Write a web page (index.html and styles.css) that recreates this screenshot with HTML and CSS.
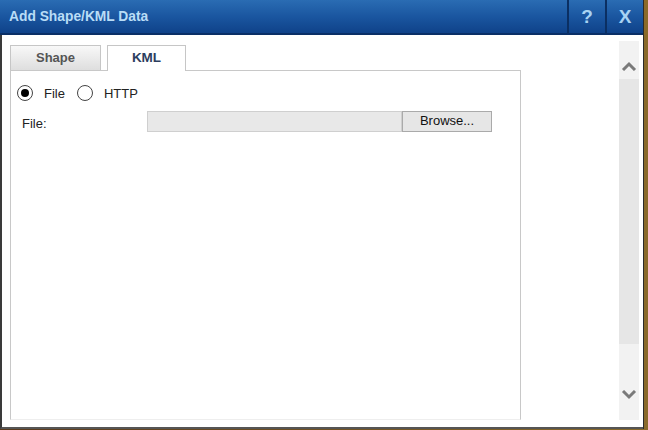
FILE: index.html
```html
<!DOCTYPE html>
<html>
<head>
<meta charset="utf-8">
<link rel="stylesheet" href="styles.css">
</head>
<body>
<div class="dialog">
  <div class="titlebar">
    <div class="title">Add Shape/KML Data</div>
    <div class="tbtn">?</div>
    <div class="tbtn">X</div>
  </div>
  <div class="body">
    <div class="main">
      <div class="tabs">
        <div class="tab">Shape</div>
        <div class="tab active">KML</div>
      </div>
      <div class="panel">
        <div class="radios">
          <span class="radio checked"></span><span class="rlabel">File</span>
          <span class="radio"></span><span class="rlabel">HTTP</span>
        </div>
        <div class="filerow">
          <span class="flabel">File:</span>
          <span class="finput"></span>
          <span class="browse">Browse...</span>
        </div>
      </div>
    </div>
    <div class="scrollbar">
      <div class="arrow">
        <svg width="16" height="10" viewBox="0 0 16 10"><path d="M2 9 L8 3 L14 9" fill="none" stroke="#7a7a7a" stroke-width="3"/></svg>
      </div>
      <div class="thumb"></div>
      <div class="track"></div>
      <div class="arrow down">
        <svg width="16" height="10" viewBox="0 0 16 10"><path d="M2 1 L8 7 L14 1" fill="none" stroke="#7a7a7a" stroke-width="3"/></svg>
      </div>
    </div>
  </div>
</div>
</body>
</html>
```
FILE: styles.css
```css
html, body {
  margin: 0;
  padding: 0;
}
body {
  width: 648px;
  height: 430px;
  background: linear-gradient(90deg, #5a3a1e, #8a6a2a);
  font-family: "Liberation Sans", Arial, sans-serif;
  overflow: hidden;
}
.dialog {
  width: 643px;
  height: 429px;
  background: #fff;
  display: flex;
  flex-direction: column;
  border-right: 1px solid #2a2a2a;
}
.titlebar {
  height: 33px;
  display: flex;
  background: linear-gradient(#2a6cb3, #1a56a0 50%, #0f4289);
  border-bottom: 2px solid #0a2f66;
}
.title {
  flex: 1;
  color: #b9ddf6;
  font-weight: bold;
  font-size: 13.8px;
  line-height: 33px;
  padding-left: 9px;
}
.tbtn {
  width: 36px;
  border-left: 2px solid #0b2f62;
  color: #a8d3f3;
  font-weight: bold;
  font-size: 19px;
  line-height: 33px;
  text-align: center;
}
.body {
  flex: 1;
  display: flex;
  border-left: 2px solid #3a3a3a;
  border-bottom: 2px solid #555;
}
.main {
  flex: 1;
  padding: 10px 0 0 8px;
  display: flex;
  flex-direction: column;
}
.tabs {
  display: flex;
  gap: 6px;
  height: 25px;
}
.tab {
  width: 89px;
  height: 24px;
  border: 1px solid #c6c6c6;
  border-bottom: none;
  background: linear-gradient(#f8f8f8, #dedede);
  color: #555;
  font-weight: bold;
  font-size: 13px;
  line-height: 24px;
  text-align: center;
}
.tab.active {
  width: 77px;
  height: 25px;
  background: #fff;
  color: #2c3d5e;
  font-size: 13.5px;
  position: relative;
  z-index: 1;
}
.panel {
  width: 511px;
  height: 350px;
  border: 1px solid #c8c8c8;
  border-bottom: 1px solid #eee;
  padding: 13px 0 0 6px;
  box-sizing: border-box;
}
.radios {
  display: flex;
  align-items: center;
  height: 18px;
  font-size: 13px;
  color: #222;
}
.radio {
  width: 16px;
  height: 16px;
  border: 1px solid #444;
  border-radius: 50%;
  box-sizing: border-box;
  position: relative;
  margin-right: 11px;
  background: #fff;
}
.radio.checked::after {
  content: "";
  position: absolute;
  left: 3px;
  top: 3px;
  width: 8px;
  height: 8px;
  border-radius: 50%;
  background: #000;
}
.rlabel {
  margin-right: 12px;
}
.filerow {
  display: flex;
  align-items: center;
  margin-top: 9px;
  height: 21px;
  font-size: 13px;
  color: #222;
}
.flabel {
  width: 125px;
  padding-left: 5px;
  padding-top: 4px;
}
.finput {
  width: 255px;
  height: 21px;
  box-sizing: border-box;
  background: #e8e8e8;
  border: 1px solid #cfcfcf;
}
.browse {
  width: 90px;
  height: 21px;
  box-sizing: border-box;
  background: #e6e6e6;
  border: 1px solid #aaa;
  text-align: center;
  line-height: 18px;
  font-size: 13px;
  color: #111;
}
.scrollbar {
  width: 20px;
  margin: 6px 4px 7px 0;
  background: #f2f2f2;
  display: flex;
  flex-direction: column;
}
.arrow {
  height: 38px;
  display: flex;
  align-items: center;
  justify-content: center;
  padding-top: 12px;
  box-sizing: border-box;
}
.arrow.down {
  height: 50px;
  padding-top: 0;
  padding-bottom: 0;
}
.thumb {
  height: 265px;
  background: #e6e6e6;
}
.track {
  flex: 1;
}
```
